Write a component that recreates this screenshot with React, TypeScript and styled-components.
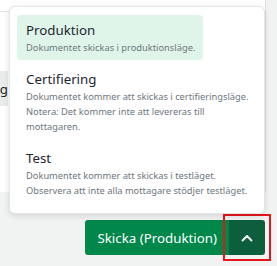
import React, { useState } from 'react';
import styled, { createGlobalStyle } from 'styled-components';

const GlobalStyle = createGlobalStyle`
  html, body {
    margin: 0;
    padding: 0;
    background: #f1f3f2;
    font-family: 'Noto Sans', 'Open Sans', sans-serif;
  }
`;

const Page = styled.div`
  position: relative;
  width: 277px;
  height: 266px;
  overflow: hidden;
  display: flex;
  flex-direction: column;
`;

const Card = styled.div`
  width: 265px;
  height: 192px;
  flex-shrink: 0;
  background: #ffffff;
  border-right: 1px solid #dcdfde;
  display: flex;
  flex-direction: column;
`;

const CardHeader = styled.div`
  height: 11px;
  border-bottom: 1px solid #e2e5e4;
`;

const CardBody = styled.div`
  padding-top: 59px;
`;

const Tab = styled.div`
  width: 8px;
  height: 35px;
  background: #e9ecea;
  display: flex;
  align-items: center;
  justify-content: flex-end;
  overflow: hidden;
  font-size: 13.3px;
  color: #212529;
  white-space: nowrap;
`;

const Footer = styled.div`
  display: flex;
  justify-content: flex-end;
  padding: 28px 12px 0 0;
`;

const ButtonGroup = styled.div`
  display: flex;
`;

const SendButton = styled.button`
  height: 35px;
  padding: 0 12px;
  border: none;
  border-radius: 3px 0 0 3px;
  background: #00874a;
  color: #ffffff;
  font-family: inherit;
  font-size: 13.3px;
  cursor: pointer;
`;

const ToggleButton = styled.button<{ focused: boolean }>`
  position: relative;
  width: 36px;
  height: 35px;
  padding: 0;
  border: none;
  border-radius: 0 3px 3px 0;
  background: #0d5e3c;
  color: #ffffff;
  display: flex;
  align-items: center;
  justify-content: center;
  cursor: pointer;
  outline: none;

  &::after {
    content: '';
    display: ${({ focused }) => (focused ? 'block' : 'none')};
    position: absolute;
    inset: -6px;
    border: 2px solid #e8141b;
    pointer-events: none;
  }
`;

const Menu = styled.div`
  position: absolute;
  left: 9px;
  top: 6px;
  width: 256px;
  box-sizing: border-box;
  padding: 8px 7px 10px;
  background: #ffffff;
  border: 1px solid #e3e6e5;
  border-radius: 6px;
  box-shadow: 0 2px 6px rgba(0, 0, 0, 0.12);
  display: flex;
  flex-direction: column;
  align-items: flex-start;
  gap: 4px;
`;

const MenuItem = styled.div<{ active: boolean }>`
  padding: 5px 3px 5px 9px;
  border-radius: 4px;
  background: ${({ active }) => (active ? '#e0f5ea' : 'transparent')};
  cursor: pointer;

  &:first-child {
    padding-right: 8px;
  }
`;

const ItemTitle = styled.div`
  font-size: 13.3px;
  line-height: 20px;
  color: #1d2631;
`;

const ItemText = styled.div`
  font-size: 9.3px;
  line-height: 15px;
  color: #6c757d;
`;

const modes = [
  {
    key: 'Produktion',
    text: 'Dokumentet skickas i produktionsläge.',
  },
  {
    key: 'Certifiering',
    text: 'Dokumentet kommer att skickas i certifieringsläge. Notera: Det kommer inte att levereras till mottagaren.',
  },
  {
    key: 'Test',
    text: 'Dokumentet kommer att skickas i testläget. Observera att inte alla mottagare stödjer testläget.',
  },
];

const App = () => {
  const [mode, setMode] = useState('Produktion');

  return (
    <Page>
      <GlobalStyle />
      <Card>
        <CardHeader />
        <CardBody>
          <Tab>Förhandsvisning</Tab>
        </CardBody>
      </Card>
      <Footer>
        <ButtonGroup>
          <SendButton>Skicka ({mode})</SendButton>
          <ToggleButton focused aria-label="Välj läge">
            <svg width="12" height="8" viewBox="0 0 12 8" fill="none">
              <path
                d="M1.5 6.5L6 2l4.5 4.5"
                stroke="currentColor"
                strokeWidth="1.8"
                strokeLinecap="round"
                strokeLinejoin="round"
              />
            </svg>
          </ToggleButton>
        </ButtonGroup>
      </Footer>
      <Menu>
        {modes.map((m) => (
          <MenuItem key={m.key} active={mode === m.key} onClick={() => setMode(m.key)}>
            <ItemTitle>{m.key}</ItemTitle>
            <ItemText>{m.text}</ItemText>
          </MenuItem>
        ))}
      </Menu>
    </Page>
  );
};

export default App;
